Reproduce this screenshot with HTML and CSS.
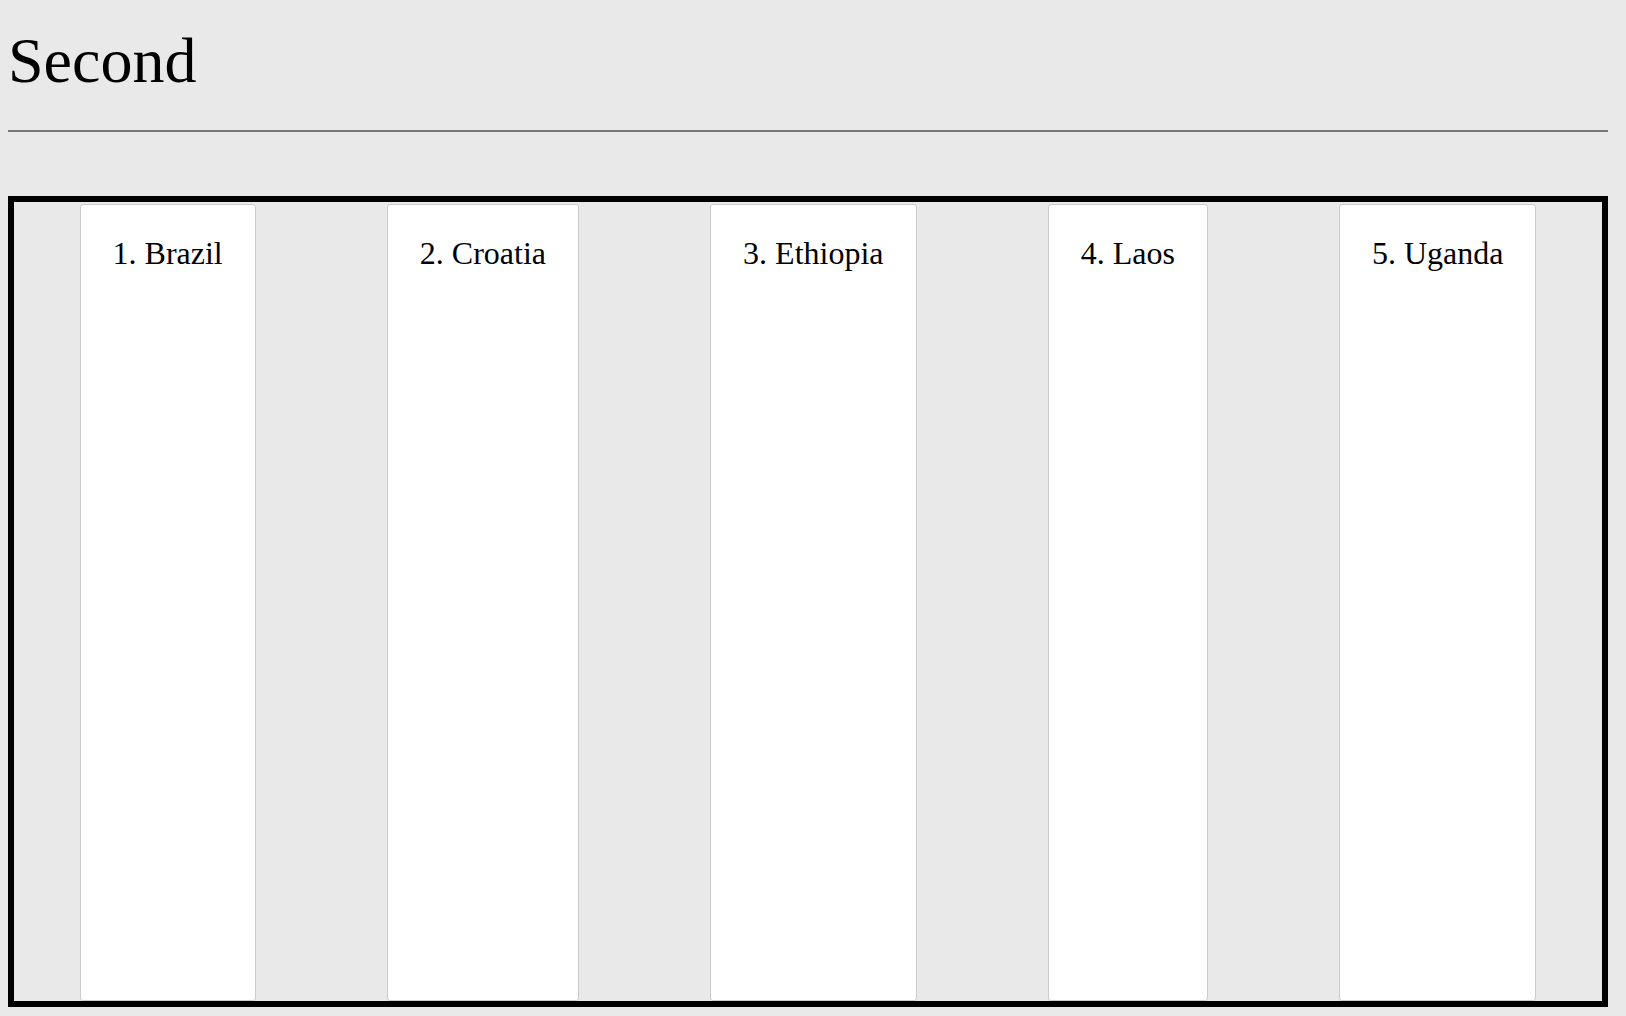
FILE: index.html
```html
<!DOCTYPE html>
<html lang="en">
<head>
  <meta charset="UTF-8" />
  <meta name="viewport" content="width=device-width, initial-scale=1.0"/>
  <title>Second</title>
  <link rel="stylesheet" href="styles.css">
</head>
<body>

<div class="page">
  <h1>Second</h1>
  <hr>

  <ol class="board">
    <li class="card">1. Brazil</li>
    <li class="card">2. Croatia</li>
    <li class="card">3. Ethiopia</li>
    <li class="card">4. Laos</li>
    <li class="card">5. Uganda</li>
  </ol>
</div>

</body>
</html>
```

FILE: styles.css
```css
body {
  font-family: 'Liberation Serif', 'Times New Roman', serif;
  background: #e9e9e9;
  color: #000;
  margin: 8px;
}

.page {
  width: 1600px;
}

h1 {
  font-size: 64px;
  font-weight: normal;
  margin: 16px 0 32px;
}

hr {
  border: none;
  border-top: 2px solid #777;
  margin: 8px 0;
}

.board {
  list-style: none;
  margin: 64px 0 0;
  padding: 0;
  height: 799px;
  border: 6px solid #000;
  display: flex;
  justify-content: space-around;
  align-items: stretch;
}

.card {
  background: white;
  border: 1px solid #ccc;
  border-radius: 3px;
  margin-top: 2px;
  padding: 30px 32px;
  font-size: 32px;
  text-align: center;
}
```
